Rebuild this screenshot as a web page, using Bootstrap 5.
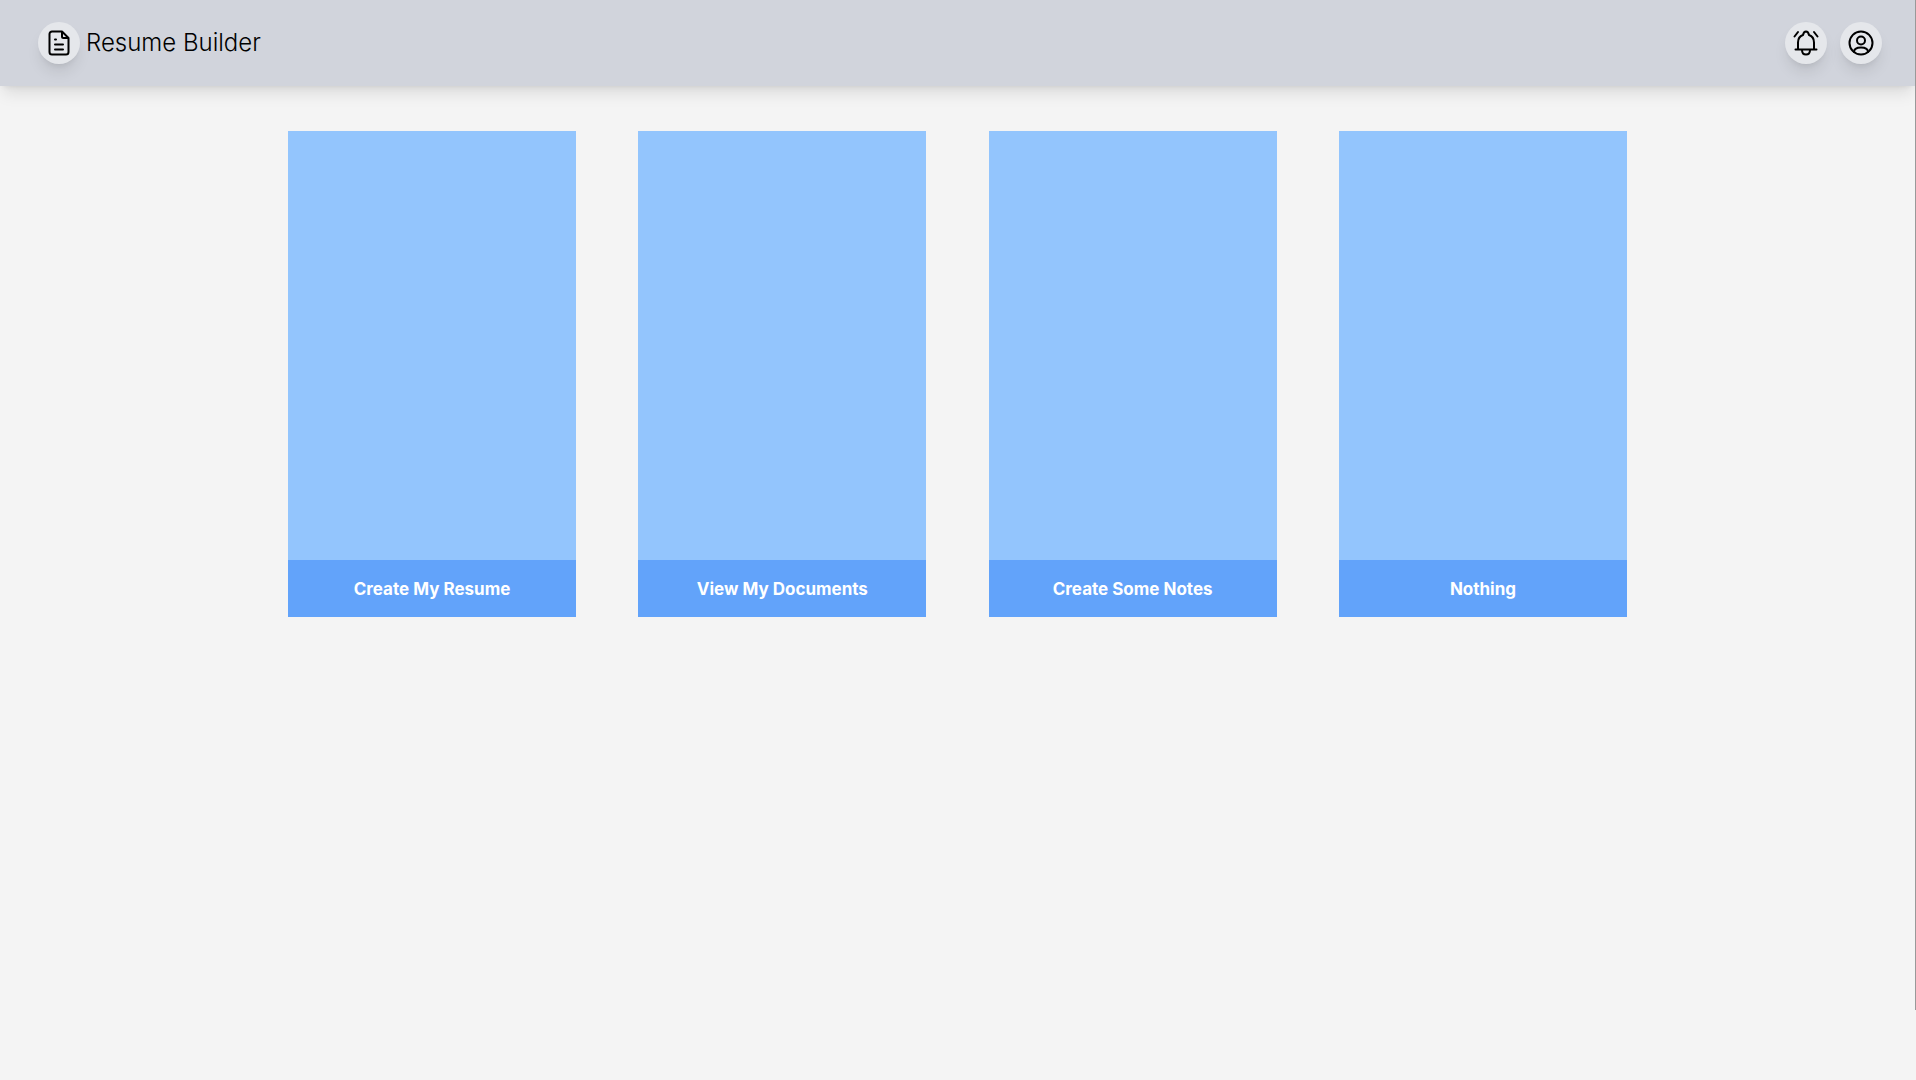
<!DOCTYPE html>
<html lang="en">
<head>
<meta charset="utf-8">
<meta name="viewport" content="width=device-width, initial-scale=1">
<title>Resume Builder</title>
<link href="https://cdn.jsdelivr.net/npm/bootstrap@5.3.0/dist/css/bootstrap.min.css" rel="stylesheet">
<style>
body { background: #f4f4f4; font-family: Inter, "Open Sans", sans-serif; color: #000; }
.app-shell { padding-right: 1px; }
.edge-line { position: absolute; top: 0; right: 0; width: 1px; height: 1010px; background: #999; }
.topbar { background: #d1d4dc; height: 86px; padding: 0 33px 0 38px; box-shadow: 0 10px 15px -3px rgba(0,0,0,.1), 0 4px 6px -4px rgba(0,0,0,.1); }
.brand-group { gap: 6px; }
.action-group { gap: 13px; }
.round-btn { width: 42px; height: 42px; border: 0; border-radius: 50%; background: #e5e7eb; color: #000; padding: 0; box-shadow: 0 10px 15px -3px rgba(0,0,0,.1), 0 4px 6px -4px rgba(0,0,0,.1); }
.brand-text { font-size: 24px; line-height: 32px; font-weight: 300; color: #000; text-decoration: none; }
.tiles { max-width: 1339px; padding-top: 45px; row-gap: 48px; }
.tile { width: 288px; color: #fff; text-decoration: none; }
.tile-art { height: 429px; background: #93c5fd; }
.tile-label { background: #62a3fa; padding: 17px 16px 15px; font-size: 17px; line-height: 25px; font-weight: 700; }
.tile:hover, .tile:focus { color: #fff; }
.line-icon { fill: none; stroke: currentColor; stroke-width: 2; stroke-linecap: round; stroke-linejoin: round; }
</style>
<script src="https://cdn.jsdelivr.net/npm/bootstrap@5.3.0/dist/js/bootstrap.bundle.min.js" defer></script>
</head>
<body>
<div class="app-shell min-vh-100 position-relative">
  <header class="topbar d-flex align-items-center justify-content-between">
    <div class="brand-group d-flex align-items-center">
      <button type="button" class="round-btn d-flex align-items-center justify-content-center" aria-label="Documents">
        <svg class="line-icon" width="26" height="26" viewBox="0 0 26 26" aria-hidden="true">
          <path d="M16 1.500H6A2.500 2.500 0 0 0 3.500 4v18A2.500 2.500 0 0 0 6 24.500h14a2.500 2.500 0 0 0 2.500-2.500V8L16 1.500V6.500A1.500 1.500 0 0 0 17.500 8h5M9 9.500h1M9 14.500h8M9 19.500h8"/>
        </svg>
      </button>
      <a href="#" class="brand-text">Resume Builder</a>
    </div>
    <div class="action-group d-flex align-items-center">
      <button type="button" class="round-btn d-flex align-items-center justify-content-center" aria-label="Notifications">
        <svg class="line-icon" width="26" height="26" viewBox="0 0 26 26" aria-hidden="true">
          <path d="M2.500 19.500h21M5 19.500V12.500c0-3.700 1.800-6.400 5-7.500.4-2 1.300-3.500 3-3.500s2.600 1.500 3 3.500c3.200 1.100 5 3.800 5 7.500v7M9 20c0 3 1.500 4.500 4 4.500s4-1.500 4-4.500M1.500 6.500L5 2M21 2l3.500 4.500"/>
        </svg>
      </button>
      <button type="button" class="round-btn d-flex align-items-center justify-content-center" aria-label="Account">
        <svg class="line-icon" width="26" height="26" viewBox="0 0 26 26" aria-hidden="true">
          <circle cx="13" cy="13" r="11.500"/><circle cx="13" cy="10.500" r="4"/><path d="M6 22c0-3 2.600-4.500 7-4.500s7 1.500 7 4.500"/>
        </svg>
      </button>
    </div>
  </header>
  <main class="tiles mx-auto d-flex flex-wrap justify-content-between">
    <a href="#" class="tile"><div class="tile-art"></div><div class="tile-label text-center">Create My Resume</div></a>
    <a href="#" class="tile"><div class="tile-art"></div><div class="tile-label text-center">View My Documents</div></a>
    <a href="#" class="tile"><div class="tile-art"></div><div class="tile-label text-center">Create Some Notes</div></a>
    <a href="#" class="tile"><div class="tile-art"></div><div class="tile-label text-center">Nothing</div></a>
  </main>
  <div class="edge-line"></div>
</div>
</body>
</html>
